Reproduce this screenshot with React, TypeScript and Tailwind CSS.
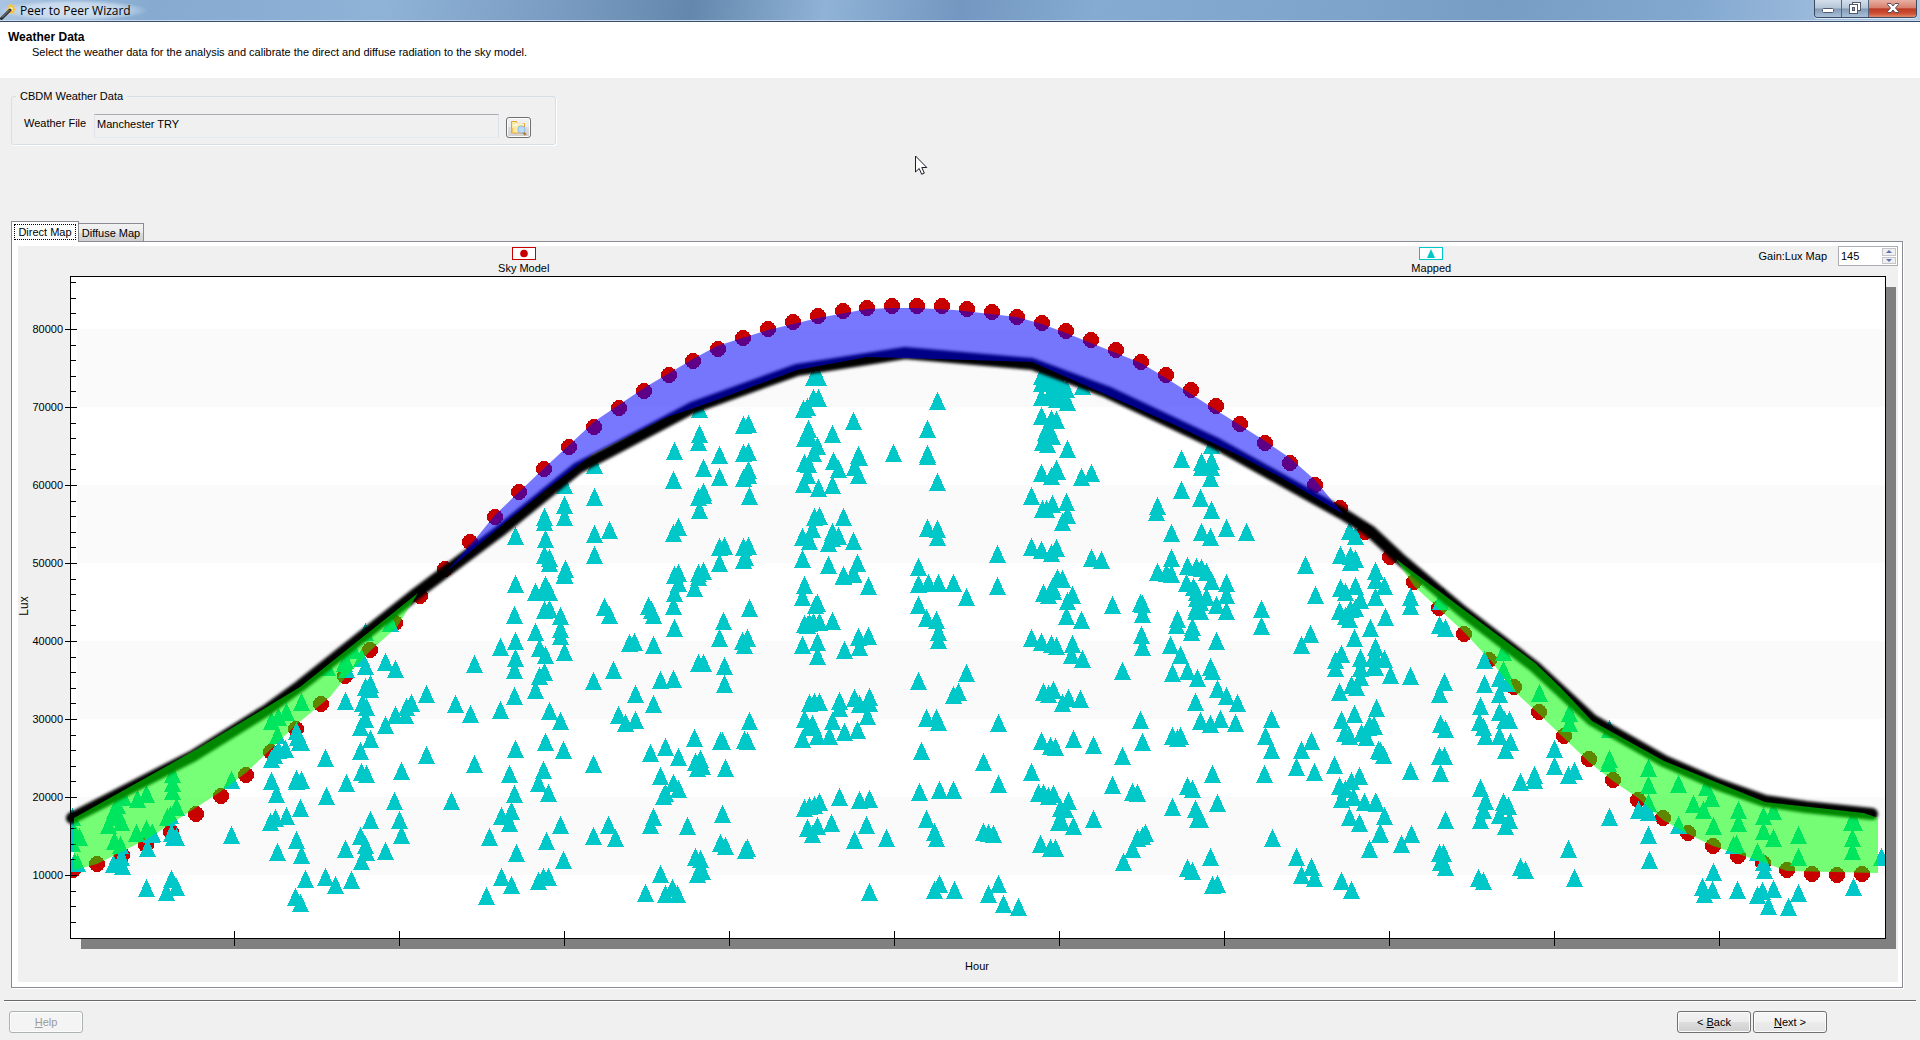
import React from "react";

type Pt = [number, number];

/* Measured samples, grouped by block of the plot. Each block has an origin, the
   number of units per pixel on each axis, and a flat x,y list. */
type Block = { ox: number; oy: number; ux: number; uy: number; v: number[] };

const BLOCKS: Block[] = [
  {
    ox: 0, oy: 560, ux: 3, uy: 3,
    v: [
      439,1013, 514,987, 528,1010, 499,1025, 694,854, 694,690, 519,860, 529,860, 514,850, 442,893, 455,852, 339,941,
      363,920, 366,947, 357,935, 232,938, 222,935, 216,840, 216,880, 216,800, 222,845, 238,860, 412,747, 439,731,
      342,780, 350,790, 325,825, 363,815, 345,800, 370,740, 352,765, 408,848, 439,838, 457,850, 342,872, 360,885,
      517,672, 517,700, 517,722, 502,802, 528,770, 511,795, 904,455, 858,485, 834,500, 814,512, 832,555, 855,596,
      834,600, 822,615, 814,627, 889,542, 892,560, 898,575, 904,575, 814,692, 829,731, 889,687, 904,689, 889,694,
      976,623, 979,737, 1039,698, 1036,452, 1032,340, 1040,356, 982,352, 1036,330, 1060,300, 1096,246, 1095,347,
      1085,323, 1156,335, 1186,356, 1170,220, 1278,431, 1423,341, 1366,461, 1411,491, 1278,614, 1423,641,
      1354,752, 1204,663, 1183,752, 1198,809, 1204,854, 1111,809, 1036,896, 1156,902, 1081,857, 1096,885,
      1099,907, 1084,932, 904,914, 889,869, 832,905, 810,815, 826,803, 858,797, 901,773, 916,986, 976,980,
      1006,1004, 1054,989, 886,1040, 901,1058, 1111,403, 1111,418, 1096,410, 1086,458, 1100,472, 1096,508,
      1080,530, 1111,566, 1081,602, 1084,665, 1098,671, 1156,524, 1186,496, 1220,470, 1234,460, 1216,494,
    ],
  },
  {
    ox: 400, oy: 240, ux: 3, uy: 3,
    v: [
      346,917, 433,860, 433,875, 493,824, 493,860, 583,800, 583,704, 493,764, 436,926, 433,974, 448,985, 448,998,
      496,1018, 493,1033, 583,911, 628,899, 583,974, 823,662, 820,749, 835,890, 820,908, 898,538, 898,611, 895,635,
      958,674, 910,713, 958,740, 1030,584, 1045,581, 1030,668, 1045,665, 1045,720, 1030,745, 1045,735, 1048,797,
      910,785, 910,795, 895,800, 898,839, 973,947, 958,950, 958,998, 1030,950, 1045,947, 1030,989, 1036,980,
      835,1030, 823,1036, 910,1022, 895,1030, 1240,440, 1255,440, 1240,503, 1255,503, 1210,538, 1222,530, 1225,598,
      1213,623, 1228,620, 1252,648, 1240,668, 1213,698, 1225,703, 1222,735, 1210,761, 1255,773, 1297,764,
      1297,611, 1360,572, 1300,692, 1315,716, 1375,674, 1378,682, 1363,710, 1375,734, 1480,668, 1243,860,
      1258,857, 1330,860, 1207,920, 1237,896, 1228,932, 1297,905, 1285,938, 1315,917, 1297,925, 1360,932,
      1207,986, 1285,1004, 1372,998, 1330,1036, 1360,1030,
    ],
  },
  {
    ox: 400, oy: 580, ux: 3, uy: 3,
    v: [
      346,41, 343,134, 405,65, 436,45, 430,65, 448,65, 448,118, 433,120, 481,137, 405,185, 346,212, 301,230, 418,235,
      436,254, 346,263, 481,176, 481,197, 493,245, 343,299, 433,305, 418,317, 405,359, 343,377, 301,419, 448,422,
      481,452, 346,536, 436,515, 490,539, 328,611, 430,599, 415,638, 445,668, 343,671, 334,722, 304,737, 328,758,
      268,800, 481,764, 439,812, 349,848, 490,869, 304,920, 334,944, 259,977, 415,932, 430,920, 445,920, 580,332,
      613,112, 628,134, 640,299, 688,218, 703,215, 745,109, 754,120, 760,134, 760,224, 706,371, 760,401, 655,434,
      676,458, 706,449, 580,581, 580,797, 625,764, 646,803, 781,329, 820,326, 820,107, 823,68, 823,173, 835,38,
      883,53, 895,20, 895,278, 910,278, 970,152, 958,203, 1048,113, 1042,203, 1027,213, 1033,224, 973,287,
      973,341, 883,503, 961,512, 967,512, 1048,452, 1033,511, 1042,512, 796,530, 751,548, 835,560, 781,617,
      820,640, 835,656, 796,668, 790,677, 886,575, 901,567, 892,593, 907,587, 976,593, 760,740, 751,764, 862,767,
      967,731, 961,818, 976,827, 1042,834, 1036,839, 886,860, 901,866, 892,911, 907,902, 781,911, 736,968,
      817,955, 832,973, 796,971, 493,14, 1213,44, 1207,80, 1245,104, 1252,99, 1213,163, 1228,160, 1240,155,
      1258,155, 1222,165, 1297,152, 1405,47, 1330,17, 1360,12, 1207,224, 1252,215, 1252,257, 1333,239, 1375,200,
      1378,230, 1405,197, 1228,398, 1243,395, 1258,395, 1318,393, 1318,413, 1363,383, 1378,401, 1408,381, 1408,398,
      1213,446, 1237,462, 1225,470, 1207,506, 1252,497, 1288,497, 1297,452, 1333,485, 1372,479, 1402,437,
      1318,680, 1378,689, 1408,686, 1213,713, 1228,708, 1243,704, 1258,695, 1222,773, 1252,767, 1237,791,
      1294,758, 1399,764, 1363,809, 1459,803, 1408,965,
    ],
  },
  {
    ox: 880, oy: 240, ux: 3, uy: 3,
    v: [
      172,512, 142,596, 142,671, 142,677, 172,755, 142,893, 172,898, 172,920, 352,971, 115,1010, 115,1061, 145,1058,
      175,1058, 220,1058, 352,1067, 484,438, 484,458, 500,440, 515,450, 530,455, 545,465, 560,476, 607,467, 484,500,
      515,500, 530,507, 515,480, 545,505, 562,515, 484,557, 514,567, 529,569, 502,590, 496,605, 517,617, 487,635,
      502,641, 562,656, 484,728, 529,716, 514,737, 532,724, 604,740, 634,728, 454,797, 517,821, 487,838, 500,838,
      559,815, 562,854, 547,875, 454,950, 484,959, 529,953, 514,968, 634,983, 664,989, 532,1045, 547,1048, 904,686,
      904,779, 995,644, 964,695, 994,692, 964,712, 994,710, 991,743, 961,803, 994,839, 832,828, 829,845, 874,908,
      964,905, 991,920, 1039,893, 1099,905, 874,983, 832,1025, 859,1030, 874,1033, 922,1007, 949,1012, 964,1015,
      979,1025, 1276,1004, 1408,902, 1426,917, 1381,975, 1411,978, 1426,988, 1411,995, 1486,1022,
    ],
  },
  {
    ox: 880, oy: 580, ux: 3, uy: 3,
    v: [
      259,80, 115,104, 139,143, 169,149, 175,185, 175,209, 259,308, 115,332, 235,365, 220,374, 139,443, 169,443,
      175,455, 355,458, 124,542, 310,575, 355,641, 118,665, 178,659, 220,659, 139,746, 163,785, 169,803, 310,785,
      325,788, 340,791, 178,941, 163,959, 223,959, 355,941, 325,971, 370,1001, 415,1010, 520,62, 490,70, 505,74,
      517,50, 577,74, 562,92, 559,137, 604,149, 454,203, 484,215, 514,221, 529,227, 577,221, 574,254, 607,266,
      490,365, 520,360, 505,371, 565,383, 547,398, 601,386, 484,512, 511,527, 526,530, 580,506, 640,524, 454,605,
      475,668, 490,668, 520,671, 505,677, 565,692, 541,715, 555,718, 535,755, 545,752, 580,767, 640,746, 481,821,
      511,833, 526,833, 697,104, 781,98, 787,103, 787,131, 784,194, 787,230, 892,146, 889,164, 871,224, 901,254,
      877,308, 922,302, 727,302, 781,449, 787,515, 727,557, 697,644, 757,665, 772,668, 796,788, 772,803, 787,798,
      757,836, 730,875, 937,170, 934,185, 1009,212, 991,290, 997,302, 952,323, 1012,356, 946,395, 1039,377,
      1072,398, 961,452, 1021,446, 991,461, 1066,458, 877,497, 901,497, 892,503, 997,611, 922,647, 937,656,
      877,710, 946,716, 952,746, 961,746, 1012,698, 991,860, 922,893, 937,902, 1012,941, 997,944, 919,38, 940,50,
      950,65, 950,85, 979,80, 949,110, 961,122, 946,122, 994,32, 1039,38, 1039,74, 1010,104, 1039,122, 961,95,
      1144,116, 1144,167, 1306,74, 1291,191, 1264,224, 1174,446, 1156,497, 1174,539, 1294,512, 1264,539, 1249,590,
      1303,605, 1153,611, 1177,803, 1249,860, 1294,890, 1264,914, 1303,923, 1381,53, 1396,65, 1426,47, 1441,90,
      1378,122, 1411,117, 1396,138, 1408,146, 1426,115, 1486,80, 1471,173, 1423,203, 1384,251, 1366,269, 1366,293,
      1441,263, 1441,295, 1441,322, 1378,365, 1414,345, 1429,350, 1486,230, 1480,260, 1480,290, 1423,431,
      1384,449, 1393,488, 1408,497, 1444,488, 1459,500, 1468,465, 1483,468, 1489,413, 1500,542, 1363,584,
      1378,647, 1396,657, 1414,632, 1438,617, 1384,686, 1420,680, 1453,697, 1489,698, 1408,740, 1438,758,
      1500,790, 1468,836, 1384,932, 1414,959,
    ],
  },
  {
    ox: 1360, oy: 560, ux: 2.8, uy: 3,
    v: [
      43,62, 43,90, 69,107, 43,140, 71,200, 29,233, 43,290, 69,326, 43,320, 43,350, 85,374, 46,473, 39,529, 25,530,
      53,600, 67,614, 43,757, 69,797, 55,851, 26,896, 117,881, 143,851, 141,140, 141,167, 141,377, 141,662, 222,225,
      238,233, 236,395, 222,431, 225,521, 239,536, 222,617, 236,617, 225,668, 239,809, 222,908, 234,908, 225,935,
      239,950, 225,152, 235,140, 348,329, 348,401, 403,305, 403,360, 390,385, 390,431, 413,400, 337,467, 334,517,
      347,530, 350,557, 390,487, 418,510, 390,557, 406,599, 420,575, 404,510, 337,713, 350,752, 345,780, 337,809,
      401,755, 415,767, 390,795, 418,809, 406,827, 449,695, 488,675, 488,689, 544,596, 544,647, 600,662, 583,675,
      583,896, 600,983, 502,429, 586,490, 586,520, 331,983, 345,992, 449,950, 463,959, 698,536, 698,626, 695,638,
      698,800, 807,653, 807,704, 807,785, 779,779, 807,758, 807,854, 810,929, 891,701, 891,824, 933,762, 971,712,
      985,745, 961,779, 989,827, 989,965, 959,1010, 987,1019, 964,1031, 1060,780, 1060,818, 1047,885, 1055,882,
      1058,1019, 1129,797, 1157,782, 1129,842, 1157,863, 1113,905, 1129,935, 1132,959, 1227,854, 1227,920,
      1126,1022, 1113,1034, 1157,1016, 1143,1067, 1199,1070, 1227,1028, 1381,1010, 1375,815, 1385,815, 1378,863,
      1378,902, 1461,920,
    ],
  },
];

const SKY: Pt[] = [
  [73,871],[97,865],[122,856],[146,846],[171,833],[196,815],[221,797],[246,776],[271,753],[296,730],[321,705],
  [345,677],[370,651],[395,624],[420,597],[445,570],[470,543],[495,518],[519,493],[544,470],[569,448],[594,428],
  [619,409],[644,392],[669,376],[693,362],[718,350],[743,339],[768,330],[793,323],[818,317],[843,312],[867,309],
  [892,307],[917,307],[942,307],[967,310],[992,313],[1017,318],[1042,324],[1066,332],[1091,341],[1116,351],
  [1141,363],[1166,376],[1191,391],[1216,407],[1240,425],[1265,444],[1290,464],[1315,486],[1340,509],[1365,533],
  [1390,558],[1414,583],[1439,609],[1464,635],[1489,661],[1514,688],[1539,713],[1564,737],[1589,760],[1613,781],
  [1638,801],[1663,819],[1688,834],[1713,847],[1738,857],[1763,864],[1787,871],[1812,875],[1837,876],[1862,875],
];

const CURVE =
  "72,819 193,757 267,711 300,687 417,594 500,532 578,469 607,454 692,409 797,371 905,354 1032,365 1107,393 1217,445 1343,515 1370,532 1399,559 1462,612 1535,668 1592,721 1664,762 1717,785 1765,802 1806,808 1872,815";

const BLUE =
  "447,572 477,538 495,516 519,493 540,473 595,422 644,389 693,360 717,347 768,331 818,319 867,310 892,309 917,309 955,311 1017,318 1042,325 1066,334 1116,354 1141,364 1166,379 1216,411 1265,442 1290,459 1315,481 1343,515 1282,479 1240,457 1177,427 1032,363 905,359 867,358 797,371 700,407 667,418 593,455 543,493 500,528";

const GREEN_LEFT =
  "74,819 167,767 197,750 300,688 418,594 397,628 370,652 345,679 330,698 297,725 247,773 220,793 197,808 147,840 123,852 97,865 74,871";

const GREEN_RIGHT =
  "1396,560 1535,664 1560,688 1592,722 1664,762 1765,803 1864,814 1878,819 1878,874 1787,872 1763,863 1713,847 1688,835 1663,821 1638,799 1613,782 1589,763 1539,715 1514,692 1492,663 1464,633 1414,587";

const MAPPED_PATH = BLOCKS.map((b) => {
  let d = "";
  for (let i = 0; i < b.v.length; i += 2) {
    const x = Math.round(b.ox + b.v[i] / b.ux - 0.5) + 0.5;
    const y = Math.round(b.oy + b.v[i + 1] / b.uy);
    d += `M${x} ${y - 18}l8.5 18h-17z`;
  }
  return d;
}).join("");

const MINOR = Array.from({ length: 43 }, (_, i) => i + 2)
  .filter((k) => k % 5 !== 0)
  .map((k) => Math.round(954 - k * 15.6) + 0.5)
  .filter((y) => y > 280);

const FONT = "'Liberation Sans', Arial, sans-serif";

function Chart() {
  return (
    <svg viewBox="18 277 1880 706" className="block h-auto w-full" role="img" aria-label="Lux by hour" fontFamily={FONT} fontSize="11">
      <defs>
        <clipPath id="plot"><rect x="71" y="278" width="1814" height="661" /></clipPath>
        <filter id="soft" x="-5%" y="-5%" width="110%" height="110%"><feGaussianBlur stdDeviation="1.6" /></filter>
      </defs>
      <rect x="81" y="288" width="1815" height="662" fill="#808080" />
      <rect x="70" y="277" width="1816" height="663" fill="#000" />
      <rect x="71" y="278" width="1814" height="661" fill="#fff" />
      {[330, 486, 642, 798].map((y) => (
        <rect key={y} x="77" y={y} width="1808" height="78" fill="#fafafa" />
      ))}
      <g clipPath="url(#plot)" shapeRendering="crispEdges">
        {SKY.map(([x, y]) => <circle key={x} cx={x} cy={y} r="8" fill="#c80000" />)}
        <path d={MAPPED_PATH} fill="#00c8c8" />
      </g>
      <g stroke="#000">
        {MINOR.map((y) => <path key={y} d={`M71 ${y}h5`} />)}
        {[80000, 70000, 60000, 50000, 40000, 30000, 20000, 10000].map((v, i) => (
          <path key={v} d={`M65 ${330.5 + i * 78}h12`} />
        ))}
        {Array.from({ length: 10 }, (_, i) => (
          <path key={i} d={`M${234.5 + i * 165} 932v15`} />
        ))}
      </g>
      <polyline points={CURVE} fill="none" stroke="#000" strokeWidth="12" strokeLinejoin="round" strokeLinecap="round" filter="url(#soft)" />
      <polygon points={BLUE} fill="#0000ff" fillOpacity="0.53" />
      <polygon points={GREEN_LEFT} fill="#00ff00" fillOpacity="0.53" />
      <polygon points={GREEN_RIGHT} fill="#00ff00" fillOpacity="0.53" />
      {[80000, 70000, 60000, 50000, 40000, 30000, 20000, 10000].map((v, i) => (
        <text key={v} x="63" y={334 + i * 78} textAnchor="end">{v}</text>
      ))}
      <text x="977" y="971" textAnchor="middle">Hour</text>
      <text transform="translate(28 607) rotate(-90)" textAnchor="middle" fontSize="12">Lux</text>
    </svg>
  );
}

function WandIcon() {
  return (
    <svg width="16" height="20" viewBox="0 0 16 20" aria-hidden="true">
      <path d="M10 3l1.500 2.500L14.500 4l-1 3 2.500 1.500-2.500 1.200.8 3-2.800-1.200L9 13V10L6.500 8.500 9 7.500 8 4.500l2 1z" fill="#f7b71d" stroke="#f3cf62" strokeWidth=".8" />
      <circle cx="11" cy="8" r="2" fill="#fff3a8" />
      <path d="M1.500 17.500L10 9" stroke="#2a2a2a" strokeWidth="3" strokeLinecap="round" />
      <path d="M2 16.500L9.500 9" stroke="#9a9a9a" strokeWidth="1" />
    </svg>
  );
}

function FolderSearchIcon() {
  return (
    <svg width="17" height="16" viewBox="0 0 17 16" aria-hidden="true">
      <path d="M1.500 1.500h5l1 2h7v9.500h-13z" fill="#fbe9a6" stroke="#e3a53a" />
      <path d="M3 5.500h3l1-1.500h6.500" stroke="#fffbe0" strokeWidth="1.500" fill="none" />
      <path d="M2.500 12V8" stroke="#f3c552" strokeWidth="1.500" />
      <path d="M13 12l2.800 2.800" stroke="#b9793f" strokeWidth="2.400" />
      <circle cx="11.500" cy="9.500" r="3.600" fill="#b8dcf7" stroke="#8fb9e3" />
    </svg>
  );
}

function TitleBar() {
  return (
    <header className="relative flex h-[22px] items-start justify-between border-b border-[#3d4c66] bg-[linear-gradient(100deg,#a9c4e2_0%,#86aad0_8%,#8fb2d7_20%,#7a9cc2_29%,#6488ad_36%,#8fb2d6_43%,#7397c0_50%,#86abd2_57%,#7fa4cc_70%,#779dc4_78%,#82a8d0_88%,#a4c0df_97%,#b5cce6_100%)] shadow-[inset_0_-1px_0_#c9dcf0]">
      <div className="flex h-[21px] items-center gap-1 bg-[radial-gradient(ellipse_at_center,rgba(225,236,248,0.85)_0%,rgba(225,236,248,0.6)_50%,rgba(225,236,248,0)_72%)] pr-4">
        <WandIcon />
        <h1 className="font-['Open_Sans',sans-serif] text-[12px] leading-5 text-black">Peer to Peer Wizard</h1>
      </div>
      <div className="mr-[3px] flex h-[18px] overflow-hidden rounded-b border border-t-0 border-[#3c4a60] shadow-[0_1px_0_#dbe8f6]">
        <button type="button" aria-label="Minimize" className="flex w-[27px] items-center justify-center border-r border-[#53657f] bg-[linear-gradient(#d3deea_0%,#b4c5d8_48%,#8399b4_52%,#a9c0da_100%)]">
          <svg width="12" height="17" viewBox="0 0 12 17"><rect x=".5" y="8.500" width="11" height="4" rx="1" fill="#fff" stroke="#515b6c" /></svg>
        </button>
        <button type="button" aria-label="Restore" className="flex w-[27px] items-center justify-center border-r border-[#53657f] bg-[linear-gradient(#d3deea_0%,#b4c5d8_48%,#8399b4_52%,#a9c0da_100%)]">
          <svg width="12" height="17" viewBox="0 0 12 17">
            <rect x="3.500" y="2.500" width="8" height="8" fill="#fff" stroke="#515b6c" />
            <rect x=".5" y="4.500" width="8" height="9" fill="#fff" stroke="#515b6c" />
            <rect x="3.500" y="7.500" width="2" height="3" fill="#8fa6c4" stroke="#515b6c" />
          </svg>
        </button>
        <button type="button" aria-label="Close" className="flex w-[47px] items-center justify-center bg-[linear-gradient(#e7b0a3_0%,#d7806d_46%,#bb3a23_52%,#cf5135_80%,#e18a6c_100%)]">
          <svg width="14" height="17" viewBox="0 0 14 17">
            <path d="M1.500 3.500h3.500l2 2.500 2-2.500h3.500v1l-3 3.500 3 3.500v1h-3.500l-2-2.500-2 2.500h-3.500v-1l3-3.500-3-3.500z" fill="#fff" stroke="#5a4a56" />
          </svg>
        </button>
      </div>
    </header>
  );
}

function LegendItem({ label, children, frame }: { label: string; children: React.ReactNode; frame: string }) {
  return (
    <div className="flex flex-col items-center pt-px">
      <svg width="24" height="13" viewBox="0 0 24 13" aria-hidden="true">
        <rect x=".5" y=".5" width="23" height="12" fill="#fff" stroke={frame} />
        {children}
      </svg>
      <span className="text-[11px] leading-4">{label}</span>
    </div>
  );
}

export default function App() {
  const wizardButton =
    "h-[22px] w-[74px] rounded-[3px] border border-[#707070] text-[11px] leading-5 shadow-[inset_0_0_0_1px_#fcfcfc]";
  return (
    <div className="relative flex min-h-screen flex-col bg-[#f0f0f0] font-['Liberation_Sans',Arial,sans-serif] text-[11px] text-black">
      <TitleBar />

      <section className="h-14 bg-white pt-[7px] pl-2">
        <h2 className="text-[12px] leading-4 font-bold">Weather Data</h2>
        <p className="pl-6 text-[11px] leading-[14px]">
          Select the weather data for the analysis and calibrate the direct and diffuse radiation to the sky model.
        </p>
      </section>

      <main className="flex flex-col pr-[17px] pl-[11px]">
        <fieldset className="mt-[10px] h-[57px] w-[545px] rounded-[3px] border border-[#d5dfe5] pl-3 shadow-[1px_1px_0_#fff]">
          <legend className="-ml-2 px-1 text-[11px] leading-4">CBDM Weather Data</legend>
          <div className="flex items-start pt-[10px]">
            <label htmlFor="weather-file" className="w-[70px] pt-px leading-4">Weather File</label>
            <input
              id="weather-file"
              readOnly
              value="Manchester TRY"
              className="h-[24px] w-[405px] border border-t-[#abadb3] border-r-[#dbdfe6] border-b-[#e3e9ef] border-l-[#e2e3ea] bg-[#f0f0f0] px-0.5 pb-1 text-[11px] outline-none"
            />
            <button
              type="button"
              aria-label="Browse weather file"
              className="mt-[3px] ml-[7px] flex h-[21px] w-[25px] items-center justify-center rounded-[3px] border border-[#707070] bg-[linear-gradient(#f2f2f2_0%,#ebebeb_49%,#dddddd_50%,#cfcfcf_100%)] shadow-[inset_0_0_0_1px_#fcfcfc]"
            >
              <FolderSearchIcon />
            </button>
          </div>
        </fieldset>

        <div role="tablist" className="mt-[76px] flex items-end">
          <button type="button" role="tab" aria-selected="true" className="relative z-10 -mb-px h-[21px] w-[68px] border border-b-0 border-[#898c95] bg-white px-0.5 pt-0.5 pb-1 text-[11px] leading-[14px]">
            <span className="block border border-dotted border-black whitespace-nowrap">Direct Map</span>
          </button>
          <button type="button" role="tab" aria-selected="false" className="h-[18px] w-[65px] border border-b-0 border-l-0 border-[#898c95] bg-[linear-gradient(#f2f2f2_0%,#ebebeb_50%,#dddddd_52%,#cfcfcf_100%)] text-[11px] leading-4 whitespace-nowrap">
            Diffuse Map
          </button>
        </div>

        <section role="tabpanel" aria-label="Direct Map" className="border border-[#898c95] bg-white pt-1 pr-1 pb-[5px] pl-[6px] shadow-[1px_1px_0_#fff]">
          <div className="relative bg-[#f0f0f0]">
            <div className="grid h-[30px] grid-cols-2 pr-[13px] pl-[52px]">
              <LegendItem label="Sky Model" frame="#c80000"><circle cx="12" cy="6.500" r="3.800" fill="#c80000" /></LegendItem>
              <LegendItem label="Mapped" frame="#00c8c8"><path d="M12 2l4 9H8z" fill="#00c8c8" /></LegendItem>
            </div>
            <div className="absolute top-0 right-0 flex h-5 items-center">
              <label htmlFor="gain" className="pr-[11px] leading-4">Gain:Lux Map</label>
              <div className="flex h-5 w-[60px] border border-[#abadb3] bg-white">
                <input id="gain" defaultValue="145" className="h-[17px] w-[43px] bg-transparent px-0.5 text-[11px] outline-none" />
                <div className="flex w-[14px] flex-col gap-px py-px">
                  <button type="button" aria-label="Increase" className="flex h-2 items-center justify-center border border-[#c3c5ca] bg-[#efefef]">
                    <svg width="6" height="3" viewBox="0 0 6 3"><path d="M3 0l3 3H0z" fill="#5a70b0" /></svg>
                  </button>
                  <button type="button" aria-label="Decrease" className="flex h-2 items-center justify-center border border-[#c3c5ca] bg-[#efefef]">
                    <svg width="6" height="3" viewBox="0 0 6 3"><path d="M0 0h6L3 3z" fill="#5a70b0" /></svg>
                  </button>
                </div>
              </div>
            </div>
            <Chart />
          </div>
        </section>
      </main>

      <footer className="mx-1 mt-3 flex justify-between border-t border-[#696969] pt-[10px] pr-[89px] pl-[5px] shadow-[inset_0_1px_0_#fff]">
        <button type="button" disabled className="h-[22px] w-[74px] rounded-[3px] border border-[#adb2b5] bg-[#f4f4f4] text-[11px] leading-5 text-[#9a9a9a] shadow-[inset_0_0_0_1px_#fcfcfc]">
          <span className="underline">H</span>elp
        </button>
        <div className="flex gap-0.5">
          <button type="button" className={wizardButton + " bg-[linear-gradient(#f2f2f2_0%,#ebebeb_49%,#dddddd_50%,#cfcfcf_100%)]"}>
            &lt; <span className="underline">B</span>ack
          </button>
          <button type="button" className={wizardButton + " bg-[linear-gradient(#f6f6f6_0%,#f2f2f2_49%,#ebebeb_50%,#e6e6e6_100%)]"}>
            <span className="underline">N</span>ext &gt;
          </button>
        </div>
      </footer>

      <svg className="pointer-events-none absolute top-[155px] left-[915px]" width="13" height="21" viewBox="0 0 13 21" aria-hidden="true">
        <path d="M.5 1v16l3.700-3.500 2.500 5.800 2.600-1.200-2.500-5.600h5z" fill="#fff" stroke="#1c1c2c" />
      </svg>
    </div>
  );
}
